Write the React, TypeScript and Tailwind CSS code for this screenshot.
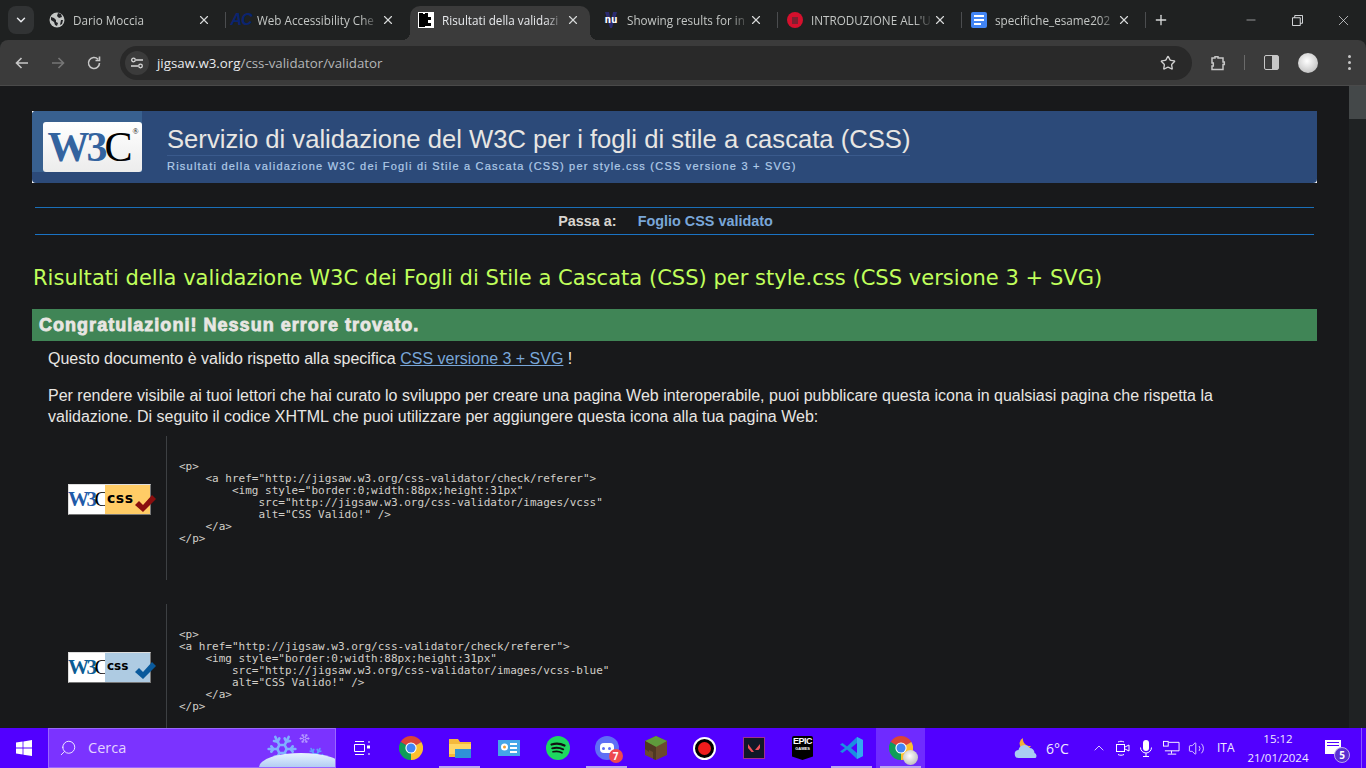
import { ChevronDown, ChevronUp, Minus, Plus, Search, Snowflake, Star, Volume2, X } from "lucide-react";
import type { ReactNode } from "react";

const sans = "font-['Open_Sans',sans-serif]";

function Globe() {
  return (
    <svg viewBox="0 0 16 16" className="w-4 h-4">
      <circle cx="8" cy="8" r="7.5" fill="#c4c7c5" />
      <path d="M2 5l3 1 2 2 0 2 2 1-1 3-2-1-1-3-3-2zM9 1l3 1 1 3-3 1-2-2zM12 8l2 0-1 4-2 1z" fill="#202124" />
    </svg>
  );
}

function Validator() {
  return (
    <svg viewBox="0 0 16 16" className="w-4 h-4">
      <rect width="16" height="16" fill="#fff" />
      <path d="M1 1h4v1h2V1h3v4h3v3h-3v3h3v3H7v1H1z" fill="#000" />
    </svg>
  );
}

function Tab({ icon, title, active, sep = true, after }: { icon: ReactNode; title: string; active?: boolean; sep?: boolean; after?: boolean }) {
  return (
    <div
      className={`relative h-[34px] shrink-0 flex items-center pb-[6px] ${
        active
          ? "w-[180px] mx-[2px] pl-[8px] pr-[10px] bg-[#3b3b3b] rounded-t-[10px] text-[#e8eaed]"
          : `w-[184px] ${after ? "pl-[11px]" : "pl-[9px]"} pr-[13px] text-[#c4c7c5]`
      }`}
    >
      <div className="w-4 h-4 shrink-0 flex items-center justify-center">{icon}</div>
      <div className="ml-[8px] pt-[1px] w-[122px] overflow-hidden whitespace-nowrap text-[11.7px] [mask-image:linear-gradient(to_right,black_85%,transparent)]">
        {title}
      </div>
      <X size={14} strokeWidth={2} className="ml-auto text-[#d6d8d8]" />
      {sep && <div className="absolute right-[-2px] top-[6px] h-[16px] w-[1px] bg-[#4b4d4f]" />}
      {active && (
        <>
          <div className="absolute left-[-8px] bottom-0 w-2 h-2 bg-[radial-gradient(circle_at_0_0,transparent_8px,#3b3b3b_8px)]" />
          <div className="absolute right-[-8px] bottom-0 w-2 h-2 bg-[radial-gradient(circle_at_100%_0,transparent_8px,#3b3b3b_8px)]" />
        </>
      )}
    </div>
  );
}

function ChromeLogo({ size = 24 }: { size?: number }) {
  return (
    <svg viewBox="0 0 24 24" width={size} height={size}>
      <path d="M12 12L1.6 6A12 12 0 0 1 22.4 6Z" fill="#db4437" />
      <path d="M12 12L1.6 6A12 12 0 0 0 12 24Z" fill="#0f9d58" />
      <path d="M12 12L22.4 6A12 12 0 0 1 12 24Z" fill="#fbc02d" />
      <circle cx="12" cy="12" r="5.6" fill="#fff" />
      <circle cx="12" cy="12" r="4.5" fill="#4285f4" />
    </svg>
  );
}

function W3cBadge({
  fill,
  blue,
  tickFill,
  cssClass,
  tickClass,
}: {
  fill: string;
  blue: string;
  tickFill: string;
  cssClass: string;
  tickClass: string;
}) {
  return (
    <div className="relative w-[83px] h-[31px] flex border border-t-[#dddddd] border-l-[#dddddd] border-r-[#777777] border-b-[#777777]">
      <div className="w-[36px] bg-white flex items-center justify-center font-['Liberation_Serif',serif] font-bold text-[21px] tracking-[-2.5px] leading-none">
        <span className={blue}>W3</span>
        <span className="text-black font-normal">C</span>
      </div>
      <div className={`flex-1 ${fill} pl-[2px] flex items-center pb-[3px] font-['DejaVu_Sans',sans-serif] font-bold text-black leading-none ${cssClass}`}>
        css
      </div>
      <svg viewBox="0 0 21 17" className={`absolute right-[-6px] w-[21px] h-[17px] ${tickClass}`}>
        <path d="M0 10l4-4 4 4L17 0l4 4L8 17z" fill={tickFill} />
      </svg>
    </div>
  );
}

function CodeRow({ badge, code, height, mt, badgePad }: { badge: ReactNode; code: string; height: string; mt: string; badgePad: string }) {
  return (
    <div className={`flex ${height} ${mt}`}>
      <div className={`w-[134px] pl-[36px] ${badgePad} shrink-0 flex items-center`}>{badge}</div>
      <pre className="border-l border-[#3d4043] pl-[12px] pb-[10px] flex-1 flex items-center font-['DejaVu_Sans_Mono',monospace] text-[11px] leading-[12px] text-[#d2cfc9]">
        {code}
      </pre>
    </div>
  );
}

const code1 = `<p>
    <a href="http://jigsaw.w3.org/css-validator/check/referer">
        <img style="border:0;width:88px;height:31px"
            src="http://jigsaw.w3.org/css-validator/images/vcss"
            alt="CSS Valido!" />
    </a>
</p>`;

const code2 = `<p>
<a href="http://jigsaw.w3.org/css-validator/check/referer">
    <img style="border:0;width:88px;height:31px"
        src="http://jigsaw.w3.org/css-validator/images/vcss-blue"
        alt="CSS Valido!" />
    </a>
</p>`;

function TaskItem({ children, running, active }: { children: ReactNode; running?: boolean; active?: boolean }) {
  return (
    <div className={`relative w-[49px] h-10 shrink-0 flex items-center justify-center ${active ? "bg-[#6f2bff]" : ""}`}>
      {children}
      {running && <div className="absolute bottom-0 left-[4px] right-[4px] h-[2px] bg-[#b9a6ee]" />}
    </div>
  );
}

export default function App() {
  return (
    <div className={`w-[1366px] h-[768px] overflow-hidden flex flex-col bg-[#1f2121] ${sans}`}>
      {/* TAB STRIP */}
      <div className="h-10 shrink-0 flex items-end pl-[8px]">
        <div className="w-[26px] h-[28px] mb-[6px] rounded-[8px] bg-[#313334] flex items-center justify-center text-[#e8eaed]">
          <ChevronDown size={14} strokeWidth={2.5} />
        </div>
        <div className="ml-[6px] flex">
          <Tab icon={<Globe />} title="Dario Moccia" />
          <Tab
            icon={<span className="font-['Liberation_Sans',sans-serif] italic font-bold text-[16px] tracking-[-1px] text-[#0a2470]">AC</span>}
            title="Web Accessibility Che"
            sep={false}
          />
          <Tab icon={<Validator />} title="Risultati della validazi" active sep={false} />
          <Tab
            icon={
              <div className="relative w-4 h-4 flex items-center justify-center">
                <svg viewBox="0 0 16 16" className="absolute inset-0 w-4 h-4">
                  <path d="M2 0h4l2 10 2-10h4L9 16H7z" fill="#2a2a70" />
                </svg>
                <span className="relative font-['DejaVu_Sans_Mono',monospace] font-bold text-[11px] text-white">nu</span>
              </div>
            }
            title="Showing results for in"
            after
          />
          <Tab
            icon={<div className="w-4 h-4 rounded-full bg-[#d5102d] flex items-center justify-center"><div className="w-[6px] h-[7px] bg-[#7c2030]" /></div>}
            title="INTRODUZIONE ALL'U"
            after
          />
          <Tab
            icon={
              <div className="w-4 h-4 rounded-[2px] bg-[#4285f4] flex flex-col gap-[2px] px-[3px] py-[3px]">
                <div className="h-[2px] bg-white" />
                <div className="h-[2px] bg-white" />
                <div className="h-[2px] w-[7px] bg-white" />
              </div>
            }
            title="specifiche_esame202"
            after
          />
        </div>
        <Plus size={16} strokeWidth={2} className="ml-[9px] mb-[12px] text-[#d6d8d8]" />
        <div className="ml-auto flex text-[#e8eaed] h-10">
          <div className="w-[46px] flex items-center justify-center"><Minus size={14} strokeWidth={1} /></div>
          <div className="w-[46px] flex items-center justify-center">
            <svg viewBox="0 0 12 12" className="w-[11px] h-[11px]" fill="none" stroke="currentColor">
              <path d="M.5 3h8.500v8.500H.5zM3 3V.5h8.500V9H9" />
            </svg>
          </div>
          <div className="w-[46px] flex items-center justify-center"><X size={17} strokeWidth={1} /></div>
        </div>
      </div>

      {/* TOOLBAR */}
      <div className="h-[46px] shrink-0 bg-[#3b3b3b] border-b border-[#4a4a4a] flex items-center rounded-t-[8px]">
        <div className="w-[120px] flex items-center pl-[14px] gap-[20px] text-[#c7c7c7]">
          <svg viewBox="0 0 16 16" className="w-4 h-4" fill="none" stroke="currentColor" strokeWidth="1.6"><path d="M14 8H2.500M7.500 3l-5 5 5 5" /></svg>
          <svg viewBox="0 0 16 16" className="w-4 h-4 text-[#767676]" fill="none" stroke="currentColor" strokeWidth="1.6"><path d="M2 8h11.500M8.500 3l5 5-5 5" /></svg>
          <svg viewBox="0 0 16 16" className="w-4 h-4" fill="none" stroke="currentColor" strokeWidth="1.6"><path d="M13.500 8A5.500 5.500 0 1 1 12 4.200M13.500 1.500v4h-4" /></svg>
        </div>
        <div className="w-[1072px] h-[34px] rounded-full bg-[#292929] flex items-center pl-[5px] pr-[16px]">
          <div className="w-[24px] h-[24px] rounded-full bg-[#3b3b3b] flex items-center justify-center text-[#d8d8d8]">
            <svg viewBox="0 0 14 14" className="w-[14px] h-[14px]" fill="none" stroke="currentColor" strokeWidth="1.3">
              <path d="M6 4h7M1 10h7" />
              <circle cx="3.500" cy="4" r="1.800" />
              <circle cx="10.500" cy="10" r="1.800" />
            </svg>
          </div>
          <div className="ml-[8px] pt-[2px] text-[13.3px] text-[#e8eaed]">
            jigsaw.w3.org<span className="text-[#b4b6b8]">/css-validator/validator</span>
          </div>
          <Star size={16} strokeWidth={2} className="ml-auto text-[#d0d0d0]" />
        </div>
        <div className="flex items-center text-[#c7c7c7] pl-[18px]">
          <svg viewBox="0 0 16 16" className="w-4 h-4" fill="none" stroke="currentColor" strokeWidth="1.5">
            <path d="M5 3V1.800h3V3h5v4h1.300v2.500H13V14.500H2V11h1.300V8H2V3z" />
          </svg>
          <div className="ml-[18px] w-[1px] h-[15px] bg-[#6a6a6a]" />
          <div className="ml-[19px] w-[15px] h-[15px] rounded-[2px] border-[1.5px] border-[#c7c7c7] flex justify-end">
            <div className="w-[6px] bg-[#c7c7c7]" />
          </div>
          <div className="ml-[19px] w-[20px] h-[20px] rounded-full bg-[radial-gradient(circle_at_45%_40%,#ffffff,#b0b0b0)]" />
          <div className="ml-[30px] flex flex-col gap-[3px]">
            <div className="w-[3px] h-[3px] rounded-full bg-[#c7c7c7]" />
            <div className="w-[3px] h-[3px] rounded-full bg-[#c7c7c7]" />
            <div className="w-[3px] h-[3px] rounded-full bg-[#c7c7c7]" />
          </div>
        </div>
      </div>

      {/* PAGE */}
      <div className="relative flex-1 min-h-0 overflow-hidden flex bg-[#18191b] font-['Liberation_Sans',sans-serif]">
        <div className="w-[1349px] shrink-0 px-[32px] pt-[25px]">
          {/* Banner */}
          <div className="h-[72px] bg-white">
            <div className="relative h-full bg-[#2c4a79] rounded-l-[4px] rounded-br-[4px] flex items-center pl-[11px] overflow-hidden">
              <div className="absolute left-0 top-0 h-[61px] w-[110px] bg-[#38608f]" />
              <div className="relative w-[99px] h-[50px] rounded-[3px] bg-gradient-to-b from-white to-[#ececec] flex items-center justify-center font-['Liberation_Serif',serif] font-bold text-[42px] leading-none tracking-[-3px] -mt-[1px] pl-[1px]">
                <span className="text-[#33639f]">W3</span>
                <span className="text-black font-normal">C</span>
                <span className="text-[8px] tracking-normal text-black self-start mt-[6px] ml-[3px] font-normal">®</span>
              </div>
              <div className="relative ml-[25px] pt-[4px]">
                <div className="text-[25.64px] leading-[30px] text-[#e8e6e3] whitespace-nowrap">
                  Servizio di validazione del W3C per i fogli di stile a cascata (CSS)
                </div>
                <div className="border-t border-[#3a5a8c] mt-[1px] pt-[2px] text-[11px] leading-[16px] tracking-[1.22px] text-[#b0cbe8] whitespace-nowrap [-webkit-text-stroke:0.2px_#b0cbe8]">
                  Risultati della validazione W3C dei Fogli di Stile a Cascata (CSS) per style.css (CSS versione 3 + SVG)
                </div>
              </div>
            </div>
          </div>

          {/* Skip bar */}
          <div className="mt-[24px] mx-[3px] h-[28px] pt-[1px] border-t border-b border-t-[#1a6fb8] border-b-[#1a73c4] flex items-center justify-center gap-[21px] text-[14.4px] font-bold pr-[18px]">
            <span className="text-[#d8d5d0]">Passa a:</span>
            <span className="text-[#79a6d8]">Foglio CSS validato</span>
          </div>

          <h1 className="mt-[29px] -mb-[1px] font-['DejaVu_Sans',sans-serif] text-[21.06px] leading-[28px] text-[#c0ff5b] whitespace-nowrap pl-[1px]">
            Risultati della validazione W3C dei Fogli di Stile a Cascata (CSS) per style.css (CSS versione 3 + SVG)
          </h1>

          <div className="mt-[18px] h-[32px] bg-[#408556] flex items-center pl-[7px] text-[18px] font-bold text-[#e8e6e3] [-webkit-text-stroke:0.8px_#e8e6e3] tracking-[1.03px] whitespace-nowrap">
            Congratulazioni! Nessun errore trovato.
          </div>

          <div className="pl-[16px] pr-[60px] text-[16px] leading-[21px] text-[#e8e6e3]">
            <p className="mt-[7px]">
              Questo documento è valido rispetto alla specifica{" "}
              <span className="text-[#79a6d8] underline">CSS versione 3 + SVG</span> !
            </p>
            <p className="mt-[16px]">
              Per rendere visibile ai tuoi lettori che hai curato lo sviluppo per creare una pagina Web interoperabile, puoi pubblicare questa icona in qualsiasi pagina che rispetta la validazione. Di seguito il codice XHTML che puoi utilizzare per aggiungere questa icona alla tua pagina Web:
            </p>
          </div>

          <CodeRow
            mt="mt-[9px]"
            height="h-[144px]"
            badgePad="pb-[17px]"
            badge={<W3cBadge fill="bg-[#ffcc66]" blue="text-[#1f5aa8]" tickFill="#8a0f0f" cssClass="text-[14px] tracking-[0.5px]" tickClass="bottom-[2px]" />}
            code={code1}
          />
          <CodeRow
            mt="mt-[24px]"
            height="h-[144px]"
            badgePad="pb-[17px]"
            badge={<W3cBadge fill="bg-[#aecbe2]" blue="text-[#0c5c94]" tickFill="#0a5a9c" cssClass="text-[12px]" tickClass="bottom-[3px]" />}
            code={code2}
          />
        </div>
        {/* Scrollbar */}
        <div className="w-[17px] bg-[#1f2223]">
          <div className="h-[33px] bg-[#444849]" />
        </div>
      </div>

      {/* TASKBAR */}
      <div className="h-10 shrink-0 bg-[#5200ff] flex items-center">
        <div className="w-[48px] h-10 flex items-center justify-center">
          <svg viewBox="0 0 16 16" className="w-4 h-4" fill="#fff">
            <path d="M0 2.400l6.600-.9v6.100H0zM7.400 1.400L16 0v7.600H7.400zM0 8.400h6.600v6.100L0 13.600zM7.400 8.400H16V16l-8.600-1.200z" />
          </svg>
        </div>
        <div className="relative w-[288px] h-[40px] bg-[#7b33ff] border border-[#9a66ff] flex items-center pl-[10px] overflow-hidden">
          <Search size={18} strokeWidth={1.3} className="text-[#efe8ff] -scale-x-100" />
          <span className="ml-[11px] text-[14.5px] text-[#e3d4ff]">Cerca</span>
          <Snowflake size={32} strokeWidth={2} className="absolute left-[217px] top-[4px] text-[#7fb0ff]" />
          <Snowflake size={11} strokeWidth={2} className="absolute left-[250px] top-[4px] text-[#b9a3ff]" />
          <Snowflake size={21} strokeWidth={2} className="absolute left-[256px] top-[17px] text-[#5e9bff]" />
          <div className="absolute right-[-8px] bottom-[-14px] w-[84px] h-[28px] rounded-[50%] bg-gradient-to-b from-[#e8f4ff] to-[#7ea6e6]" />
        </div>
        <div className="ml-[1px] flex">
          <TaskItem>
            <svg viewBox="0 0 16 16" className="w-4 h-4" fill="none" stroke="#fff">
              <path d="M.5 4.500h10v7H.5zM1 1.500h9M1 14.500h9M15 1v2M15 13v2" />
              <rect x="13" y="5.500" width="3" height="3" fill="#fff" stroke="none" />
            </svg>
          </TaskItem>
          <TaskItem><ChromeLogo /></TaskItem>
          <TaskItem running>
            <svg viewBox="0 0 24 24" className="w-6 h-6">
              <path d="M1 3h9l2 3h11v15H1z" fill="#f4b93c" />
              <path d="M7 13h16v9H7z" fill="#2f93d8" />
              <path d="M1 8h22v5H7v5H1z" fill="#ffd666" />
            </svg>
          </TaskItem>
          <TaskItem>
            <svg viewBox="0 0 22 16" className="w-[22px] h-[16px]">
              <rect width="22" height="16" fill="#45a6e8" />
              <circle cx="6.500" cy="7" r="3.500" fill="#fff" />
              <circle cx="6.500" cy="7" r="1.500" fill="#f0a030" />
              <path d="M12 3h7v2h-7zM12 7h7v2h-7zM12 11h7v2h-7z" fill="#fff" />
            </svg>
          </TaskItem>
          <TaskItem>
            <svg viewBox="0 0 24 24" className="w-6 h-6" fill="none" stroke="#111" strokeLinecap="round">
              <circle cx="12" cy="12" r="12" fill="#1ed760" stroke="none" />
              <path d="M5.500 8.500c4.500-1.300 9-1 13 1" strokeWidth="2.2" />
              <path d="M6.200 12.300c4-1 7.600-.7 11 1" strokeWidth="1.9" />
              <path d="M7 15.800c3.300-.8 6.400-.5 9 1" strokeWidth="1.6" />
            </svg>
          </TaskItem>
          <TaskItem running>
            <div className="relative w-6 h-6 rounded-full bg-[#5f6ef5] flex items-center justify-center">
              <div className="w-[14px] h-[10px] rounded-[4px] bg-white flex items-center justify-center gap-[3px]">
                <div className="w-[3px] h-[3px] rounded-full bg-[#5f6ef5]" />
                <div className="w-[3px] h-[3px] rounded-full bg-[#5f6ef5]" />
              </div>
              <div className="absolute right-[-4px] bottom-[-3px] w-[14px] h-[14px] rounded-full bg-[#ee4a4f] text-white text-[10px] font-bold leading-[14px] text-center">7</div>
            </div>
          </TaskItem>
          <TaskItem>
            <svg viewBox="0 0 22 24" className="w-[22px] h-6">
              <path d="M11 0l11 5v14l-11 5L0 19V5z" fill="#6b4a2e" />
              <path d="M11 0l11 5-11 6L0 5z" fill="#5f9a3c" />
              <path d="M0 5l11 6v13l-3-1v-7l-4-2v2l-4-3z" fill="#4f3722" />
            </svg>
          </TaskItem>
          <TaskItem>
            <div className="w-[23px] h-[23px] rounded-full bg-black border-2 border-white flex items-center justify-center">
              <div className="w-[13px] h-[13px] rounded-full bg-[#ee1c1c]" />
            </div>
          </TaskItem>
          <TaskItem>
            <div className="w-[22px] h-[22px] bg-[#111827] border border-[#a03090] flex items-center justify-center">
              <svg viewBox="0 0 12 10" className="w-[12px] h-[10px]" fill="#f0505a">
                <path d="M0 1l6 8H3.500L0 5zM12 1v4l-1.500 2H7z" />
              </svg>
            </div>
          </TaskItem>
          <TaskItem>
            <div className="w-[21px] h-[24px] bg-black rounded-t-[2px] [clip-path:polygon(0_0,100%_0,100%_85%,50%_100%,0_85%)] flex flex-col items-center pt-[1px] text-white font-['Liberation_Sans',sans-serif] font-bold leading-none">
              <span className="text-[9px] tracking-[-0.5px]">EPIC</span>
              <span className="text-[4px] mt-[1px]">GAMES</span>
            </div>
          </TaskItem>
          <TaskItem running>
            <svg viewBox="0 0 24 24" className="w-6 h-6">
              <path d="M17 1l6 3v16l-6 3L7 13.500 2.500 17 0 15.500 5 12 0 8.500 2.500 7 7 10.500z" fill="#1a8fe0" />
              <path d="M17 7l-6 5 6 5z" fill="#5200ff" />
              <path d="M17 1l6 3v16l-6 3z" fill="#33a9f0" />
            </svg>
          </TaskItem>
          <TaskItem active running>
            <div className="relative">
              <ChromeLogo />
              <div className="absolute right-[-5px] bottom-[-5px] w-[15px] h-[15px] rounded-full bg-[radial-gradient(circle_at_45%_40%,#ffffff,#a9a9a9)]" />
            </div>
          </TaskItem>
        </div>

        {/* Tray */}
        <div className="ml-auto flex items-center text-white h-10">
          <svg viewBox="0 0 26 24" className="w-[26px] h-6 mr-[6px]">
            <path d="M9 2a6 6 0 1 0 8 8A7 7 0 0 1 9 2z" fill="#f5b335" />
            <path d="M5 22a4 4 0 0 1-.5-8 6 6 0 0 1 11-2 5 5 0 0 1 5 5 3 3 0 0 1 1 5z" fill="#a9cdf2" />
          </svg>
          <span className="text-[14px] w-[23px] whitespace-nowrap text-[#f0eaff]">6°C</span>
          <ChevronUp size={16} strokeWidth={1.2} className="ml-[22px]" />
          <svg viewBox="0 0 14 16" className="ml-[9px] w-[14px] h-4" fill="none" stroke="currentColor">
            <rect x=".5" y="4.500" width="8" height="7" />
            <path d="M9 7l4-2v6l-4-2M2 2c2-1 4-1 6 0M2 14.500c2 1 4 1 6 0" />
          </svg>
          <svg viewBox="0 0 12 17" className="ml-[10px] w-[12px] h-[17px]" fill="none" stroke="currentColor">
            <rect x="3" y="0" width="6" height="11" rx="3" fill="currentColor" stroke="none" />
            <path d="M.5 7.500a5.500 5.500 0 0 0 11 0M6 13v3.500M3 16.500h6" />
          </svg>
          <svg viewBox="0 0 18 16" className="ml-[11px] w-[17px] h-4" fill="none" stroke="currentColor">
            <path d="M6 2h11v9H2" />
            <rect x=".5" y="1" width="5" height="5" />
            <path d="M9 11v3M5 14.500h9" />
          </svg>
          <Volume2 size={17} strokeWidth={1.1} className="ml-[8px]" />
          <span className="ml-[12px] w-[22px] text-[12px] text-[#f0eaff]">ITA</span>
          <div className="ml-[6px] w-[66px] flex flex-col items-center text-[11.5px] leading-[19px] text-[#f0eaff]">
            <span>15:12</span>
            <span>21/01/2024</span>
          </div>
          <div className="relative ml-[14px] w-[16px] h-[14px] mb-[3px] bg-white flex flex-col gap-[2px] px-[2px] py-[2px]">
            <div className="h-[1px] bg-[#5200ff]" />
            <div className="h-[1px] bg-[#5200ff]" />
            <div className="absolute right-[-9px] bottom-[-9px] w-[16px] h-[16px] rounded-full bg-[#5a2fd0] border border-[#b9a6ee] text-[10px] leading-[14px] text-center font-bold">5</div>
          </div>
          <div className="ml-[20px] mr-[4px] w-[1px] h-10 bg-[#8a55ff]" />
        </div>
      </div>
    </div>
  );
}
